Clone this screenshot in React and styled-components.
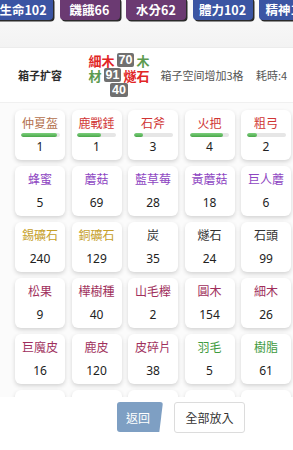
import React from "react";
import styled, { createGlobalStyle } from "styled-components";

const GlobalStyle = createGlobalStyle`
  html, body {
    margin: 0;
    padding: 0;
    background: #ffffff;
    font-family: "Liberation Sans", "Noto Sans CJK TC", sans-serif;
  }
`;

const Page = styled.div`
  width: 293px;
  height: 450px;
  overflow: hidden;
  background: #ffffff;
`;

const StatBar = styled.div`
  display: flex;
  gap: 6.5px;
  margin-left: -7px;
  margin-top: -3px;
  padding-bottom: 27px;
  background: linear-gradient(#fbfbfb, #f3f3f3);
`;

const Stat = styled.div`
  flex-shrink: 0;
  width: 60px;
  height: 23px;
  border-radius: 4px;
  background: ${(p) => (p.$kind === "blue" ? "#3b55a3" : "#6b3a72")};
  box-shadow: 1.5px 1.5px 0 #2a2a2a;
  color: #ffffff;
  font-family: "Noto Sans CJK TC", sans-serif;
  font-weight: 700;
  font-size: 12.5px;
  display: flex;
  align-items: center;
  justify-content: center;
  padding-top: 2px;
  box-sizing: border-box;
  white-space: nowrap;
  overflow: hidden;
`;

const TaskRow = styled.div`
  display: grid;
  grid-template-columns: 80px 73px 98px 1fr;
  height: 56px;
  background: #ffffff;
  border-top: 1px solid #ececec;
  border-bottom: 1px solid #f0f0f0;
  box-sizing: border-box;
  font-family: "Noto Sans CJK TC", sans-serif;
`;

const TaskCell = styled.div`
  display: flex;
  align-items: center;
  justify-content: ${(p) => p.$align || "center"};
  padding-left: ${(p) => p.$pad || 0}px;
  font-size: 11px;
  color: ${(p) => (p.$strong ? "#2b2b2b" : "#555555")};
  font-weight: ${(p) => (p.$strong ? 700 : 400)};
  white-space: nowrap;
`;

const Materials = styled.div`
  width: 64px;
  margin-left: 5px;
  font-size: 13px;
  font-weight: 700;
  line-height: 15px;
  text-align: center;
  white-space: normal;
  word-break: break-all;
`;

const Mat = styled.span`
  color: ${(p) => (p.$tone === "green" ? "#5b9a4f" : "#e12525")};
`;

const Qty = styled.span`
  display: inline-block;
  background: #707070;
  color: #ffffff;
  border-radius: 2px;
  padding: 0 2px;
  margin: 0 2px;
  font-size: 12.5px;
  line-height: 14px;
  vertical-align: top;
  margin-top: 0.5px;
  font-family: "Liberation Sans", sans-serif;
`;

const ItemArea = styled.div`
  height: 294px;
  overflow: hidden;
  padding: 7px 0 0 15px;
  box-sizing: border-box;
  background: #fbfbfb;
`;

const Grid = styled.div`
  display: grid;
  grid-template-columns: repeat(5, 50px);
  column-gap: 6.5px;
  row-gap: 6px;
`;

const Card = styled.div`
  height: 50px;
  background: #ffffff;
  border-radius: 6px;
  box-shadow: 0 2px 4px rgba(0, 0, 0, 0.16);
  display: flex;
  flex-direction: column;
  align-items: center;
  padding-top: 5px;
  box-sizing: border-box;
`;

const Name = styled.div`
  height: 16px;
  line-height: 16px;
  font-size: 12px;
  font-family: "Noto Sans CJK TC", sans-serif;
  color: ${(p) => p.$color};
  white-space: nowrap;
`;

const Slot = styled.div`
  height: 8px;
  display: flex;
  align-items: center;
`;

const Track = styled.div`
  width: 39px;
  height: 4px;
  border-radius: 2px;
  background: #e6e6e6;
  overflow: hidden;
`;

const Fill = styled.div`
  height: 100%;
  border-radius: 2px;
  background: linear-gradient(#7ccf7c, #4aa84a);
`;

const Count = styled.div`
  height: 16px;
  line-height: 16px;
  font-size: 12px;
  color: #222222;
  font-family: "Noto Sans", "Liberation Sans", sans-serif;
`;

const Footer = styled.div`
  display: flex;
  gap: 11px;
  padding: 5px 0 0 117px;
`;

const BackButton = styled.button`
  width: 46px;
  height: 30px;
  border: none;
  border-radius: 3px;
  background: #7e9fc3;
  color: #ffffff;
  font-size: 12px;
  font-family: "Noto Sans CJK TC", sans-serif;
  clip-path: polygon(0 0, 100% 0, 92% 100%, 0 100%);
  padding: 0 4px 0 0;
`;

const PutAllButton = styled.button`
  width: 71px;
  height: 31px;
  border: 1px solid #dcdcdc;
  border-radius: 3px;
  background: #ffffff;
  color: #333333;
  font-size: 12px;
  font-family: "Noto Sans CJK TC", sans-serif;
  padding: 0;
`;

const C = {
  brown: "#b3704c",
  red: "#d03434",
  purple: "#8e46c2",
  gold: "#c6a02a",
  dark: "#333333",
  maroon: "#a02f5c",
  green: "#3d9a3d",
};

const stats = [
  { label: "生命102", kind: "blue" },
  { label: "饑餓66", kind: "purple" },
  { label: "水分62", kind: "purple" },
  { label: "體力102", kind: "blue" },
  { label: "精神102", kind: "blue" },
];

const items = [
  { name: "仲夏盔", n: 1, color: C.brown, bar: 94 },
  { name: "鹿戰錘", n: 1, color: C.red, bar: 62 },
  { name: "石斧", n: 3, color: C.red, bar: 24 },
  { name: "火把", n: 4, color: C.red, bar: 84 },
  { name: "粗弓", n: 2, color: C.red, bar: 28 },
  { name: "蜂蜜", n: 5, color: C.purple },
  { name: "蘑菇", n: 69, color: C.purple },
  { name: "藍草莓", n: 28, color: C.purple },
  { name: "黃蘑菇", n: 18, color: C.purple },
  { name: "巨人蘑", n: 6, color: C.purple },
  { name: "錫礦石", n: 240, color: C.gold },
  { name: "銅礦石", n: 129, color: C.gold },
  { name: "炭", n: 35, color: C.dark },
  { name: "燧石", n: 24, color: C.dark },
  { name: "石頭", n: 99, color: C.dark },
  { name: "松果", n: 9, color: C.maroon },
  { name: "樺樹種", n: 40, color: C.maroon },
  { name: "山毛櫸", n: 2, color: C.maroon },
  { name: "圓木", n: 154, color: C.maroon },
  { name: "細木", n: 26, color: C.maroon },
  { name: "巨魔皮", n: 16, color: C.maroon },
  { name: "鹿皮", n: 120, color: C.maroon },
  { name: "皮碎片", n: 38, color: C.maroon },
  { name: "羽毛", n: 5, color: C.green },
  { name: "樹脂", n: 61, color: C.green },
  { name: "", n: "", color: C.dark },
  { name: "", n: "", color: C.dark },
  { name: "", n: "", color: C.dark },
  { name: "", n: "", color: C.dark },
  { name: "", n: "", color: C.dark },
];

export default function App() {
  return (
    <Page>
      <GlobalStyle />
      <StatBar>
        {stats.map((s) => (
          <Stat key={s.label} $kind={s.kind}>
            {s.label}
          </Stat>
        ))}
      </StatBar>

      <TaskRow>
        <TaskCell $strong>箱子扩容</TaskCell>
        <TaskCell>
          <Materials>
            <Mat>細木</Mat>
            <Qty>70</Qty>
            <Mat $tone="green">木材</Mat>
            <Qty>91</Qty>
            <Mat>燧石</Mat>
            <Qty>40</Qty>
          </Materials>
        </TaskCell>
        <TaskCell>箱子空间增加3格</TaskCell>
        <TaskCell $align="flex-start" $pad={5}>耗時:4</TaskCell>
      </TaskRow>

      <ItemArea>
        <Grid>
          {items.map((it, i) => (
            <Card key={i}>
              <Name $color={it.color}>{it.name}</Name>
              <Slot>
                {it.bar != null && (
                  <Track>
                    <Fill style={{ width: `${it.bar}%` }} />
                  </Track>
                )}
              </Slot>
              <Count>{it.n}</Count>
            </Card>
          ))}
        </Grid>
      </ItemArea>

      <Footer>
        <BackButton>返回</BackButton>
        <PutAllButton>全部放入</PutAllButton>
      </Footer>
    </Page>
  );
}
